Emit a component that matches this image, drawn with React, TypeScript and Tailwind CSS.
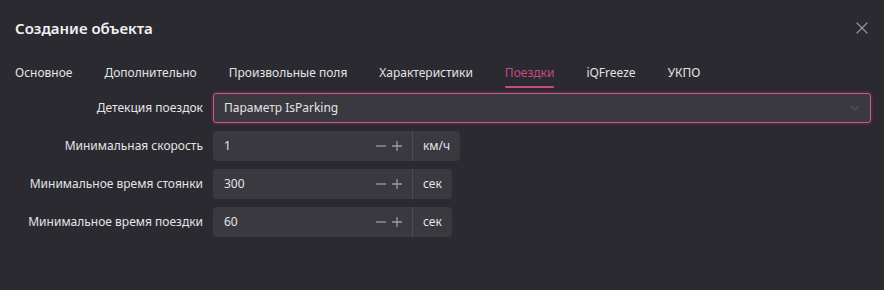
import { ChevronDown, X } from "lucide-react";

const tabs = ["Основное", "Дополнительно", "Произвольные поля", "Характеристики", "Поездки", "iQFreeze", "УКПО"];

const fields = [
   { label: "Минимальная скорость", value: "1", unit: "км/ч" },
   { label: "Минимальное время стоянки", value: "300", unit: "сек" },
   { label: "Минимальное время поездки", value: "60", unit: "сек" },
];

function NumberField({ value, unit }: { value: string; unit: string }): React.ReactElement {
   return (
      <div className="flex h-[30px] w-fit items-stretch rounded-[4px] bg-[#3a393f] text-[12px] text-[#e4e4e6]">
         <div className="flex w-[199px] items-center justify-between pl-[11px] pr-[9px]">
            <span>{value}</span>
            <div className="flex items-center gap-[4px] text-[#9a999e]">
               <svg width="12" height="12" viewBox="0 0 12 12" aria-hidden>
                  <path d="M1 6h10" stroke="currentColor" strokeWidth="1.3" />
               </svg>
               <svg width="12" height="12" viewBox="0 0 12 12" aria-hidden>
                  <path d="M1 6h10M6 1v10" stroke="currentColor" strokeWidth="1.3" />
               </svg>
            </div>
         </div>
         <div className="flex items-center border-l border-[#4d4c52] px-[10px]">{unit}</div>
      </div>
   );
}

export default function App(): React.ReactElement {
   return (
      <div
         className="h-[290px] w-[884px] overflow-hidden bg-[#2b2a30] text-[#e4e4e6]"
         style={{ fontFamily: '"Noto Sans", "Open Sans", sans-serif' }}
      >
         <div className="flex items-center justify-between pl-[15px] pr-[12px] pt-[17px]">
            <h1 className="text-[15px] font-semibold leading-[22px] text-[#f1f1f3]">Создание объекта</h1>
            <X className="size-[20px] text-[#9a999f]" strokeWidth={1.3} aria-hidden />
         </div>

         <div className="mt-[24px] flex gap-[32px] pl-[15px] text-[12px] leading-[20px]">
            {tabs.map((t) => (
               <div key={t} className="flex flex-col">
                  <span className={t === "Поездки" ? "text-[#c8498a]" : "text-[#e4e4e6]"}>{t}</span>
                  <span
                     className={
                        t === "Поездки"
                           ? "mt-[3px] h-[2px] rounded-full bg-[#c8498a]"
                           : "mt-[3px] h-[2px]"
                     }
                  />
               </div>
            ))}
         </div>

         <div className="mt-[5px] grid grid-cols-[203px_1fr] items-center gap-x-[10px] gap-y-[8px] pr-[13px] text-[12px]">
            <span className="text-right text-[#e4e4e6]">Детекция поездок</span>
            <div className="flex h-[30px] items-center justify-between rounded-[3px] border border-[#c75a90] bg-[#3a393f] pl-[10px] pr-[8px] shadow-[0_0_0_2px_rgba(160,40,90,0.25)]">
               <span>Параметр IsParking</span>
               <ChevronDown className="size-[14px] text-[#6c6b71]" strokeWidth={1.5} aria-hidden />
            </div>
            {fields.map((f) => (
               <>
                  <span key={f.label + "l"} className="text-right text-[#e4e4e6]">
                     {f.label}
                  </span>
                  <NumberField key={f.label} value={f.value} unit={f.unit} />
               </>
            ))}
         </div>
      </div>
   );
}
